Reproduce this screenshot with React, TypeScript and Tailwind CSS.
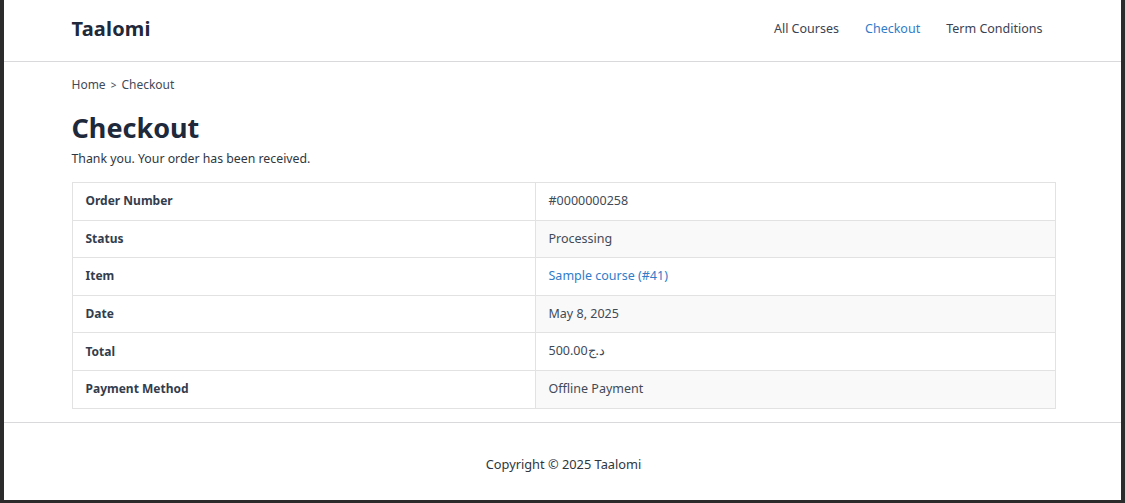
import React from 'react';

const rows: { label: string; value: string; link?: boolean }[] = [
  { label: 'Order Number', value: '#0000000258' },
  { label: 'Status', value: 'Processing' },
  { label: 'Item', value: 'Sample course (#41)', link: true },
  { label: 'Date', value: 'May 8, 2025' },
  { label: 'Total', value: '500.00د.ج' },
  { label: 'Payment Method', value: 'Offline Payment' },
];

const App: React.FC = () => {
  return (
    <div className="h-[503px] bg-[#2b2b2b] pl-[4px] pr-[4px] pb-[3px] font-['Noto_Sans',sans-serif]">
      <div className="h-full bg-white flex flex-col">
        <header className="h-[62px] border-b border-[#d9d9dc] shrink-0">
          <div className="w-[986px] mx-auto pl-[2px] h-full flex items-center justify-between pb-[3px]">
            <a className="text-[20px] font-bold text-[#1e293b] tracking-[0.2px]">Taalomi</a>
            <nav className="flex items-center text-[12.5px] text-[#3b4252]">
              <a className="px-[13px]">All Courses</a>
              <a className="px-[13px] text-[#2f7cc9]">Checkout</a>
              <a className="px-[13px]">Term Conditions</a>
            </nav>
          </div>
        </header>

        <main className="w-[986px] mx-auto pl-[2px] flex-1">
          <div className="flex items-center gap-[5px] text-[12px] text-[#414a57] mt-[14px] h-[18px]">
            <span>Home</span>
            <span className="text-[10px]">&gt;</span>
            <span>Checkout</span>
          </div>
          <h1 className="text-[27px] font-bold text-[#1e293b] mt-[16px] leading-[36px]">Checkout</h1>
          <p className="text-[12.3px] text-[#2f3640] leading-[18px] mt-[4px]">Thank you. Your order has been received.</p>

          <table className="w-full mt-[14px] border-collapse border border-[#e2e2e2] text-[12.5px]">
            <tbody>
              {rows.map((r, i) => (
                <tr key={r.label} className="h-[37.6px]">
                  <td className="w-[463px] border border-[#e2e2e2] px-[13px] text-[12px] font-bold text-[#333d4d]">
                    {r.label}
                  </td>
                  <td
                    className={`border border-[#e2e2e2] px-[13px] ${i % 2 === 1 ? 'bg-[#f9f9f9]' : 'bg-white'} ${
                      r.link ? 'text-[#2f7cc9]' : 'text-[#414a57]'
                    }`}
                  >
                    {r.value}
                  </td>
                </tr>
              ))}
            </tbody>
          </table>
        </main>

        <footer className="h-[78px] border-t border-[#d9d9dc] flex justify-center pt-[32px] pl-[2px] shrink-0">
          <p className="text-[12.8px] text-[#2f3640] leading-[18px]">Copyright © 2025 Taalomi</p>
        </footer>
      </div>
    </div>
  );
};

export default App;
